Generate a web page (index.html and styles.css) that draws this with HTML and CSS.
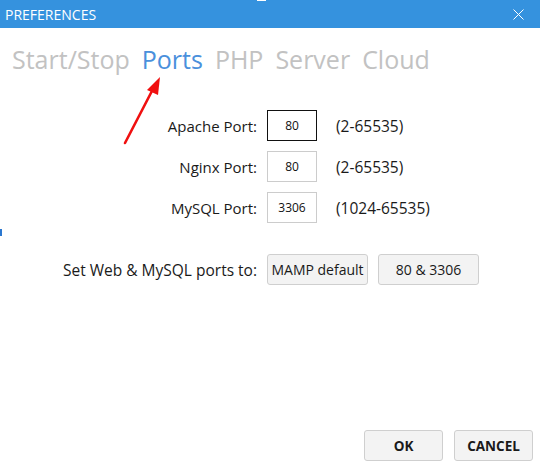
FILE: index.html
```html
<!DOCTYPE html>
<html>
<head>
<meta charset="utf-8">
<link rel="stylesheet" href="styles.css">
</head>
<body>
<div class="window">
  <div class="titlebar">
    <span class="title">PREFERENCES</span>
    <svg class="close" width="11" height="11" viewBox="0 0 11 11"><path d="M0.5 0.5L10.5 10.5M10.5 0.5L0.5 10.5" stroke="#fff" stroke-width="1" fill="none"/></svg>
  </div>
  <span class="mark-top"></span>
  <nav class="tabs">
    <span class="tab">Start/Stop</span>
    <span class="tab active">Ports</span>
    <span class="tab">PHP</span>
    <span class="tab">Server</span>
    <span class="tab">Cloud</span>
  </nav>
  <svg class="arrow" width="60" height="80" viewBox="0 0 60 80">
    <line x1="5" y1="68" x2="33" y2="14" stroke="#f01010" stroke-width="2.6" stroke-linecap="round"/>
    <polygon points="40,2 27,15 38,20" fill="#f01010"/>
  </svg>
  <div class="ports">
    <label class="lbl">Apache Port:</label>
    <div class="field focused">80</div>
    <span class="range">(2-65535)</span>
    <label class="lbl">Nginx Port:</label>
    <div class="field">80</div>
    <span class="range">(2-65535)</span>
    <label class="lbl">MySQL Port:</label>
    <div class="field">3306</div>
    <span class="range">(1024-65535)</span>
  </div>
  <div class="presets">
    <span class="lbl">Set Web &amp; MySQL ports to:</span>
    <button class="btn preset">MAMP default</button>
    <button class="btn preset">80 &amp; 3306</button>
  </div>
  <span class="mark-left"></span>
  <div class="footer">
    <button class="btn action">OK</button>
    <button class="btn action">CANCEL</button>
  </div>
</div>
</body>
</html>
```

FILE: styles.css
```css
* { box-sizing: border-box; }
html, body { margin: 0; padding: 0; }
body {
  width: 540px;
  height: 465px;
  background: #fff;
  font-family: "Open Sans", "Noto Sans", sans-serif;
  overflow: hidden;
}
.window {
  position: relative;
  width: 540px;
  height: 465px;
  display: flex;
  flex-direction: column;
}
.titlebar {
  height: 28px;
  background: #3592de;
  display: flex;
  align-items: center;
  justify-content: space-between;
  padding: 0 16px 0 5px;
}
.title {
  color: #fff;
  font-size: 14px;
}
.close { display: block; }
.mark-top {
  position: absolute;
  left: 257px;
  top: 0;
  width: 9px;
  height: 1px;
  background: #fff;
}
.mark-left {
  position: absolute;
  left: 0;
  top: 229px;
  width: 2px;
  height: 7px;
  background: #2b78d0;
}
.tabs {
  display: flex;
  gap: 12px;
  padding: 12px 0 0 12px;
  font-size: 25px;
  line-height: 38px;
}
.tab { color: #c2c2c2; }
.tab.active { color: #4a90dc; }
.arrow {
  position: absolute;
  left: 120px;
  top: 75px;
}
.ports {
  display: grid;
  grid-template-columns: 267px 50px auto;
  row-gap: 10px;
  margin-top: 32px;
  align-items: center;
}
.lbl {
  font-size: 15px;
  color: #1a1a1a;
  text-align: right;
}
.ports .lbl { padding-right: 10px; }
.field {
  height: 31px;
  width: 50px;
  border: 1px solid #cccccc;
  display: flex;
  align-items: center;
  justify-content: center;
  font-size: 12px;
  color: #111;
}
.field.focused { border-color: #111; }
.range {
  font-size: 15.5px;
  color: #1a1a1a;
  padding-left: 19px;
}
.presets {
  display: flex;
  align-items: center;
  margin-top: 31px;
}
.presets .lbl {
  width: 257px;
  margin-right: 10px;
  white-space: nowrap;
  font-size: 15.5px;
}
.btn {
  font-family: inherit;
  background: #f3f3f3;
  border: 1px solid #cfcfcf;
  border-radius: 3px;
  color: #1a1a1a;
  height: 31px;
  padding: 0;
}
.preset {
  font-size: 14px;
  width: 101px;
  margin-right: 10px;
}
.footer {
  margin-top: auto;
  display: flex;
  justify-content: flex-end;
  gap: 11px;
  padding: 0 7px 4px 0;
}
.action {
  width: 79px;
  font-size: 13.5px;
  font-weight: 700;
}
```
